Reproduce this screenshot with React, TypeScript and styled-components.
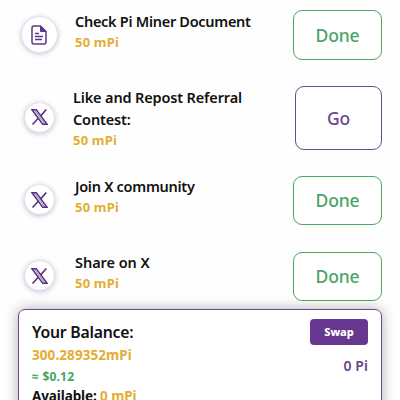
import React from 'react';
import styled, { createGlobalStyle } from 'styled-components';

const GlobalStyle = createGlobalStyle`
  * { box-sizing: border-box; }
  body { margin: 0; background: #fefefe; overflow: hidden; font-family: "Noto Sans", "Open Sans", sans-serif; }
`;

const Page = styled.main`
  width: 400px;
  height: 400px;
  overflow: hidden;
  padding: 10px 18px 0;
`;

const TaskList = styled.ul`
  list-style: none;
  margin: 0;
  padding: 0;
`;

const TaskRow = styled.li<{ $height: number; $gap: number }>`
  display: flex;
  height: ${(p) => p.$height}px;
  margin-bottom: ${(p) => p.$gap}px;
`;

const IconSlot = styled.div`
  flex: none;
  width: 42px;
  display: flex;
  justify-content: center;
  align-items: center;
`;

const IconCircle = styled.div<{ $size: number; $shift: number }>`
  width: ${(p) => p.$size}px;
  height: ${(p) => p.$size}px;
  margin-top: ${(p) => p.$shift}px;
  border-radius: 50%;
  border: 1px solid #e8ddef;
  background: #fff;
  box-shadow: 0 1px 5px rgba(82, 48, 112, 0.3);
  display: flex;
  align-items: center;
  justify-content: center;
`;

const TaskText = styled.div<{ $left: number }>`
  flex: 1;
  padding-left: ${(p) => p.$left}px;
  white-space: nowrap;
`;

const Title = styled.div<{ $spacing: number; $height: number }>`
  font-size: 14.5px;
  line-height: ${(p) => p.$height}px;
  font-weight: 600;
  color: #111;
  letter-spacing: ${(p) => p.$spacing}px;
`;

const Reward = styled.div`
  font-size: 13px;
  line-height: 21px;
  font-weight: 700;
  color: #e3ad32;
  letter-spacing: 0.2px;
`;

const ActionButton = styled.button<{ $tone: string; $width: number }>`
  flex: none;
  width: ${(p) => p.$width}px;
  height: 100%;
  padding: 0 0 1px;
  border: 1px solid ${(p) => p.$tone};
  border-radius: 9px;
  background: #fff;
  color: ${(p) => p.$tone};
  font: 500 17.5px/24px "Noto Sans", sans-serif;
  letter-spacing: -0.1px;
`;

const Card = styled.section`
  display: flex;
  justify-content: space-between;
  height: 120px;
  padding: 9px 13px 0;
  border: 1px solid #70478c;
  border-radius: 7px;
  background: #fff;
  box-shadow: 0 0 13px rgba(0, 0, 0, 0.32);
`;

const Balances = styled.div`
  white-space: nowrap;
`;

const Line = styled.div<{ $size: number; $height: number; $color?: string; $weight?: number; $spacing?: number }>`
  font-size: ${(p) => p.$size}px;
  line-height: ${(p) => p.$height}px;
  font-weight: ${(p) => p.$weight ?? 700};
  color: ${(p) => p.$color ?? '#111'};
  letter-spacing: ${(p) => p.$spacing ?? 0}px;
`;

const Gold = styled.span`
  color: #e3ad32;
`;

const CardSide = styled.div`
  display: flex;
  flex-direction: column;
  align-items: flex-end;
`;

const SwapButton = styled.button`
  width: 58px;
  height: 26px;
  padding: 0;
  border: 0;
  border-radius: 4px;
  background: #683891;
  color: #fff;
  font: 800 11px/24px "Noto Sans", sans-serif;
`;

const PiAmount = styled.div`
  margin-top: 11px;
  font-size: 14px;
  line-height: 20px;
  font-weight: 600;
  color: #6c4289;
  letter-spacing: 0.1px;
`;

const DocumentIcon = () => (
  <svg width="16" height="20" viewBox="0 0 16 20" fill="none" stroke="#633488">
    <path d="M3 1H9.5L15 6.5V17a2 2 0 0 1-2 2H3a2 2 0 0 1-2-2V3a2 2 0 0 1 2-2Z" strokeWidth="1.5" />
    <path d="M9.5 1V6.5H15Z" fill="#633488" />
    <path d="M4 8.5H8M4 11.5H12M4 14.5H11" strokeWidth="1.3" />
  </svg>
);

const XIcon = () => (
  <svg width="17" height="16" viewBox="0 0 17 16" fill="none" stroke="#593382">
    <path d="M1 .8H5.3L16 15.2H11.7Z" strokeWidth="1.5" />
    <path d="M3.3 1L13.8 15" strokeWidth="1" opacity=".65" />
    <path d="M15.3.5L9.5 7.1M7.3 9.3L1.5 15.5" strokeWidth="1.6" />
  </svg>
);

type Task = {
  title: string[];
  spacing: number;
  lineHeight: number;
  done: boolean;
  icon: 'doc' | 'x';
  height: number;
  gap: number;
  left: number;
  shift: number;
};

const tasks: Task[] = [
  { title: ['Check Pi Miner Document'], spacing: -0.29, lineHeight: 22, done: true, icon: 'doc', height: 50, gap: 26, left: 15, shift: -1 },
  { title: ['Like and Repost Referral', 'Contest:'], spacing: -0.15, lineHeight: 22, done: false, icon: 'x', height: 64, gap: 26, left: 13, shift: -2 },
  { title: ['Join X community'], spacing: -0.28, lineHeight: 21, done: true, icon: 'x', height: 49, gap: 27, left: 15, shift: -2 },
  { title: ['Share on X'], spacing: -0.05, lineHeight: 21, done: true, icon: 'x', height: 49, gap: 8, left: 15, shift: -2 },
];

export default function App() {
  return (
    <>
      <GlobalStyle />
      <Page>
        <TaskList>
          {tasks.map((t) => (
            <TaskRow key={t.title[0]} $height={t.height} $gap={t.gap}>
              <IconSlot>
                <IconCircle $size={t.icon === 'doc' ? 37 : 31} $shift={t.shift}>
                  {t.icon === 'doc' ? <DocumentIcon /> : <XIcon />}
                </IconCircle>
              </IconSlot>
              <TaskText $left={t.left}>
                {t.title.map((line) => (
                  <Title key={line} $spacing={t.spacing} $height={t.lineHeight}>{line}</Title>
                ))}
                <Reward>50 mPi</Reward>
              </TaskText>
              <ActionButton $tone={t.done ? '#4ba565' : '#70478c'} $width={t.done ? 89 : 87}>
                {t.done ? 'Done' : 'Go'}
              </ActionButton>
            </TaskRow>
          ))}
        </TaskList>
        <Card>
          <Balances>
            <Line $size={15.8} $height={26} $weight={600} $spacing={-0.25}>Your Balance:</Line>
            <Line $size={13.5} $height={21} $color="#e3ad32" $spacing={0.08}>300.289352mPi</Line>
            <Line $size={12} $height={21} $color="#45a45f" $spacing={0.2}>≈ $0.12</Line>
            <Line $size={13.5} $height={18} $spacing={-0.1}>
              Available: <Gold>0 mPi</Gold>
            </Line>
          </Balances>
          <CardSide>
            <SwapButton>Swap</SwapButton>
            <PiAmount>0 Pi</PiAmount>
          </CardSide>
        </Card>
      </Page>
    </>
  );
}
